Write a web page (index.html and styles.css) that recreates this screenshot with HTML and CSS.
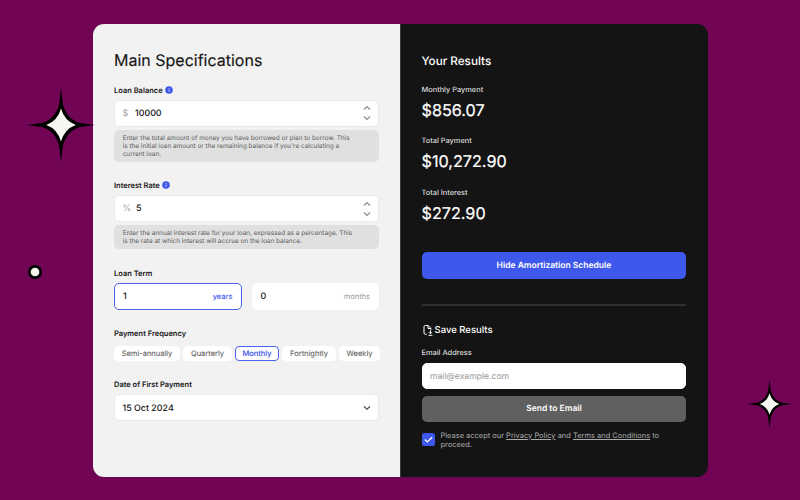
FILE: index.html
```html
<!DOCTYPE html>
<html lang="en">
<head>
<meta charset="utf-8">
<title>Loan Calculator</title>
<link rel="stylesheet" href="styles.css">
</head>
<body>
<main class="card">
  <section class="panel specs">
    <h1 class="title"><span>Main Specifications</span></h1>

    <div class="field">
      <div class="label"><span>Loan Balance</span><svg class="info" viewBox="0 0 8 8"><circle cx="4" cy="4" r="3.8" fill="#3f58ec"/><path d="M4 3.6V5.7M4 2.2V2.9" stroke="#fff" stroke-width=".8"/></svg></div>
      <div class="input"><span class="unit">$</span><span>10000</span>
        <svg class="stepper" viewBox="0 0 8 16"><path d="M1 4.500 4 1.600 7 4.500M1 11.500 4 14.400 7 11.500"/></svg></div>
      <p class="hint">Enter the total amount of money you have borrowed or plan to borrow. This<br>is the initial loan amount or the remaining balance if you're calculating a<br>current loan.</p>
    </div>

    <div class="field rate">
      <div class="label"><span>Interest Rate</span><svg class="info" viewBox="0 0 8 8"><circle cx="4" cy="4" r="3.8" fill="#3f58ec"/><path d="M4 3.6V5.7M4 2.2V2.9" stroke="#fff" stroke-width=".8"/></svg></div>
      <div class="input"><span class="unit">%</span><span>5</span>
        <svg class="stepper" viewBox="0 0 8 16"><path d="M1 4.500 4 1.600 7 4.500M1 11.500 4 14.400 7 11.500"/></svg></div>
      <p class="hint">Enter the annual interest rate for your loan, expressed as a percentage. This<br>is the rate at which interest will accrue on the loan balance.</p>
    </div>

    <div class="field term">
      <div class="label"><span>Loan Term</span></div>
      <div class="pair">
        <div class="input active"><span>1</span><span class="suffix">years</span></div>
        <div class="input"><span>0</span><span class="suffix">months</span></div>
      </div>
    </div>

    <div class="field frequency">
      <div class="label"><span>Payment Frequency</span></div>
      <div class="pills">
        <span class="pill semi">Semi-annually</span><span class="pill quarter">Quarterly</span><span class="pill month selected">Monthly</span><span class="pill fort">Fortnightly</span><span class="pill week">Weekly</span>
      </div>
    </div>

    <div class="field date">
      <div class="label"><span>Date of First Payment</span></div>
      <div class="input"><span>15 Oct 2024</span><svg class="chevron" viewBox="0 0 8 8"><path d="M1 2.400 4 5.300 7 2.400"/></svg></div>
    </div>
  </section>

  <section class="panel results">
    <h2 class="subtitle">Your Results</h2>
    <dl class="figures">
      <div><dt>Monthly Payment</dt><dd>$856.07</dd></div>
      <div><dt>Total Payment</dt><dd>$10,272.90</dd></div>
      <div><dt>Total Interest</dt><dd>$272.90</dd></div>
    </dl>
    <div class="button primary"><span>Hide Amortization Schedule</span></div>
    <div class="rule"></div>
    <h3 class="save"><svg viewBox="0 0 12 12"><path d="M4.8 10.2H3.2Q2 10.2 2 9V2.7Q2 1.500 3.2 1.500H6.1L9 4.4V5.8M6 1.6V4.5H9M8.4 6.2V9.6M6.9 8.2 8.4 9.7 9.9 8.2M6.5 11.3H10.4"/></svg><span>Save Results</span></h3>
    <div class="email-label">Email Address</div>
    <div class="input email">mail@example.com</div>
    <div class="button send"><span>Send to Email</span></div>
    <div class="consent">
      <svg viewBox="0 0 13 13"><rect width="13" height="13" rx="2.6" fill="#3f58ec"/><path d="M2.8 6.6 5.2 8.9 10.2 4.2" fill="none" stroke="#fff" stroke-width="1.35"/></svg>
      <p>Please accept our <u>Privacy Policy</u> and <u>Terms and Conditions</u> to<br>proceed.</p>
    </div>
  </section>
</main>

<svg class="star star-large" viewBox="0 0 70 76"><path d="M35 1L36.900 17Q40.500 32 54 36.100L69 38L54 39.900Q40.500 44 36.900 59L35 75L33.100 59Q29.500 44 16 39.900L1 38L16 36.100Q29.500 32 33.100 17Z" fill="#000"/><path d="M35 21.500Q38.500 34 49.800 38Q38.500 42 35 54.500Q31.500 42 20.300 38Q31.500 34 35 21.500Z" fill="#f6f7f0"/></svg>
<svg class="star star-small" viewBox="0 0 70 76"><path d="M35 1L36.900 17Q40.500 32 54 36.100L69 38L54 39.900Q40.500 44 36.900 59L35 75L33.100 59Q29.500 44 16 39.900L1 38L16 36.100Q29.500 32 33.100 17Z" fill="#000"/><path d="M35 21.500Q38.500 34 49.800 38Q38.500 42 35 54.500Q31.500 42 20.300 38Q31.500 34 35 21.500Z" fill="#f6f7f0"/></svg>
<svg class="dot" viewBox="0 0 16 16"><circle cx="8" cy="8" r="5.700" fill="#f6f7f0" stroke="#000" stroke-width="2.700"/></svg>
</body>
</html>
```

FILE: styles.css
```css
* { box-sizing: border-box; }
body {
  margin: 0;
  width: 800px;
  height: 500px;
  padding: 24px 92.500px 23px 93px;
  background: #720455;
  font-family: Inter, "Liberation Sans", sans-serif;
  color: #171717;
  position: relative;
  overflow: hidden;
  text-rendering: geometricPrecision;
}
h1, h2, h3, p, dl, dd { margin: 0; font-weight: 400; }
svg { flex: none; }

.card { display: flex; width: 614.500px; height: 453px; border-radius: 11px; overflow: hidden; background: #141414; }
.panel { display: flex; flex-direction: column; }
.specs { width: 307px; background: #f2f2f2; padding: 26px 21px 0; }
.results { flex: 1; border-left: 1px solid #3c3c3c; padding: 27px 21.100px 0 20.500px; color: #fff; }

.title { font-size: 16px; line-height: 20px; -webkit-text-stroke: .15px; }
.field { margin-top: 14px; }
.label { display: flex; align-items: center; gap: 3px; height: 12px; font-size: 7.500px; font-weight: 600; }
.info { width: 8px; height: 8px; margin-left: -.5px; }
.input {
  display: flex; align-items: center; height: 27px; margin-top: 3.500px; padding: 0 7.500px;
  background: #fff; border: 1px solid #e9e9e9; border-radius: 5px;
  font-size: 8.900px; font-weight: 500;
}
.unit { min-width: 12.500px; color: #a0a0a0; font-weight: 400; }
.stepper { width: 8px; height: 16px; margin-left: auto; }
.stepper path { fill: none; stroke: #888; stroke-width: 1.1; }
.hint {
  margin-top: 3px; padding: 4.400px 8.700px 4px; border-radius: 5px; background: #e0e0e0; color: #5c5c5c;
  font-size: 6.420px; line-height: 8px; white-space: nowrap;
}
.rate { margin-top: 17.500px; }
.rate .input { padding-top: 1px; }
.rate .unit { min-width: 13.500px; }
.rate .hint { margin-top: 2.800px; }
.term { margin-top: 18px; }
.pair { display: grid; grid-template-columns: 1fr 1fr; gap: 10px; }
.pair .input { border-color: #fff; padding: 1px 8px 0; }
.pair .active { border-color: #4b63ee; }
.suffix { margin-left: auto; color: #999; font-size: 7.500px; font-weight: 400; }
.active .suffix { color: #3f58ec; font-weight: 500; }
.frequency { margin-top: 17.500px; }
.pills { display: flex; gap: 3px; width: 266px; margin-top: 6.500px; }
.pill {
  display: flex; justify-content: center; align-items: center; height: 15.500px;
  border: 1px solid #fff; border-radius: 4px; background: #fff; color: #666; font-size: 7.500px; white-space: nowrap;
  -webkit-text-stroke: .1px;
}
.semi { width: 66px; }
.quarter { width: 49px; }
.month { width: 44px; }
.fort { width: 54px; }
.week { width: 41px; }
.selected { border-color: #4b63ee; color: #3f58ec; font-weight: 500; }
.date { margin-top: 17.800px; }
.date .input { padding-top: 1px; }
.chevron { width: 8px; height: 8px; margin-left: auto; }
.chevron path { fill: none; stroke: #333; stroke-width: 1.1; }

.subtitle { font-size: 11.700px; line-height: 21px; height: 20px; font-weight: 500; }
.figures { display: flex; flex-direction: column; gap: 11.500px; margin-top: 12.500px; }
dt { height: 12px; font-size: 7.400px; line-height: 12.500px; font-weight: 500; color: #ddd; }
dd { height: 28px; font-size: 16.200px; line-height: 28px; font-weight: 400; -webkit-text-stroke: .2px; }
.button { display: flex; flex: none; align-items: center; justify-content: center; height: 26.500px; padding-top: 1px; border-radius: 5px; font-size: 8.500px; font-weight: 600; }
.primary { margin-top: 25.500px; background: #3f58ec; }
.rule { flex: none; height: 2px; margin-top: 25.500px; background: #303030; }
.save { display: flex; align-items: center; height: 16px; margin-top: 15.500px; font-size: 9.500px; font-weight: 500; gap: 1px; }
.save svg { width: 12px; height: 12px; }
.save span { padding-top: 1px; }
.save path { fill: none; stroke: #fff; stroke-width: 1; }
.email-label { height: 12px; margin-top: 9px; font-size: 7.400px; line-height: 12px; font-weight: 500; color: #ddd; }
.email { flex: none; height: 26.500px; margin-top: 4px; border-color: #fff; padding: 2px 7.500px 0; color: #999; font-size: 8.600px; font-weight: 400; }
.send { margin-top: 6.500px; background: #606060; }
.consent { display: flex; gap: 6px; margin-top: 8.500px; }
.consent svg { width: 13px; height: 13px; margin-top: 2px; }
.consent p { color: #aaa; font-size: 7.480px; line-height: 9px; white-space: nowrap; }
u { text-decoration-thickness: .7px; text-underline-offset: 1px; }

.star { position: absolute; }
.star-large { left: 26.300px; top: 87px; width: 70px; height: 76px; }
.star-small { left: 744.500px; top: 379px; width: 49px; height: 50px; }
.dot { position: absolute; left: 27px; top: 264px; width: 16px; height: 16px; }
```
